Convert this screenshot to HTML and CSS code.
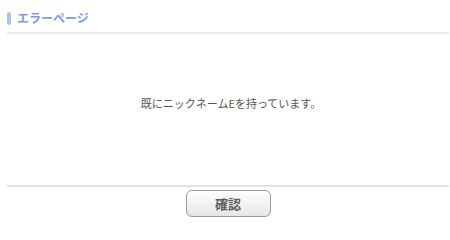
FILE: index.html
```html
<!DOCTYPE html>
<html lang="ja">
<head>
<meta charset="utf-8">
<title>エラーページ</title>
<link rel="stylesheet" href="styles.css">
</head>
<body>
<div class="page">
  <div class="header">
    <span class="mark"></span>
    <span class="title">エラーページ</span>
  </div>
  <div class="content">
    <p class="message">既にニックネームEを持っています。</p>
  </div>
  <div class="footer">
    <button class="btn" type="button">確認</button>
  </div>
</div>
</body>
</html>
```
FILE: styles.css
```css
html, body {
  margin: 0;
  padding: 0;
  background: #ffffff;
}
body {
  font-family: "Noto Sans CJK JP", "Noto Sans", sans-serif;
}
.page {
  width: 442px;
  margin-left: 7px;
}
.header {
  height: 34px;
  box-sizing: border-box;
  border-bottom: 2px solid #ececec;
  display: flex;
  align-items: flex-start;
  padding-top: 10px;
  gap: 6px;
}
.mark {
  display: block;
  width: 4px;
  height: 13px;
  margin-top: 2px;
  border-radius: 2px;
  background: #adc2f6;
}
.title {
  font-size: 12px;
  line-height: 16px;
  font-weight: bold;
  color: #7c98f0;
}
.content {
  height: 151px;
  box-sizing: border-box;
  padding-top: 61px;
}
.message {
  margin: 0;
  text-align: center;
  font-size: 11px;
  line-height: 16px;
  color: #555555;
  padding-left: 6px;
}
.footer {
  border-top: 2px solid #e3e3e3;
  display: flex;
  justify-content: center;
  padding-top: 3px;
}
.btn {
  width: 85px;
  height: 27px;
  border: 1px solid #9a9a9a;
  border-radius: 6px;
  background: linear-gradient(#ffffff, #e6e6e6);
  font-family: "Noto Sans CJK JP", sans-serif;
  font-size: 13px;
  font-weight: bold;
  color: #5e5e5e;
  padding: 0;
}
```
